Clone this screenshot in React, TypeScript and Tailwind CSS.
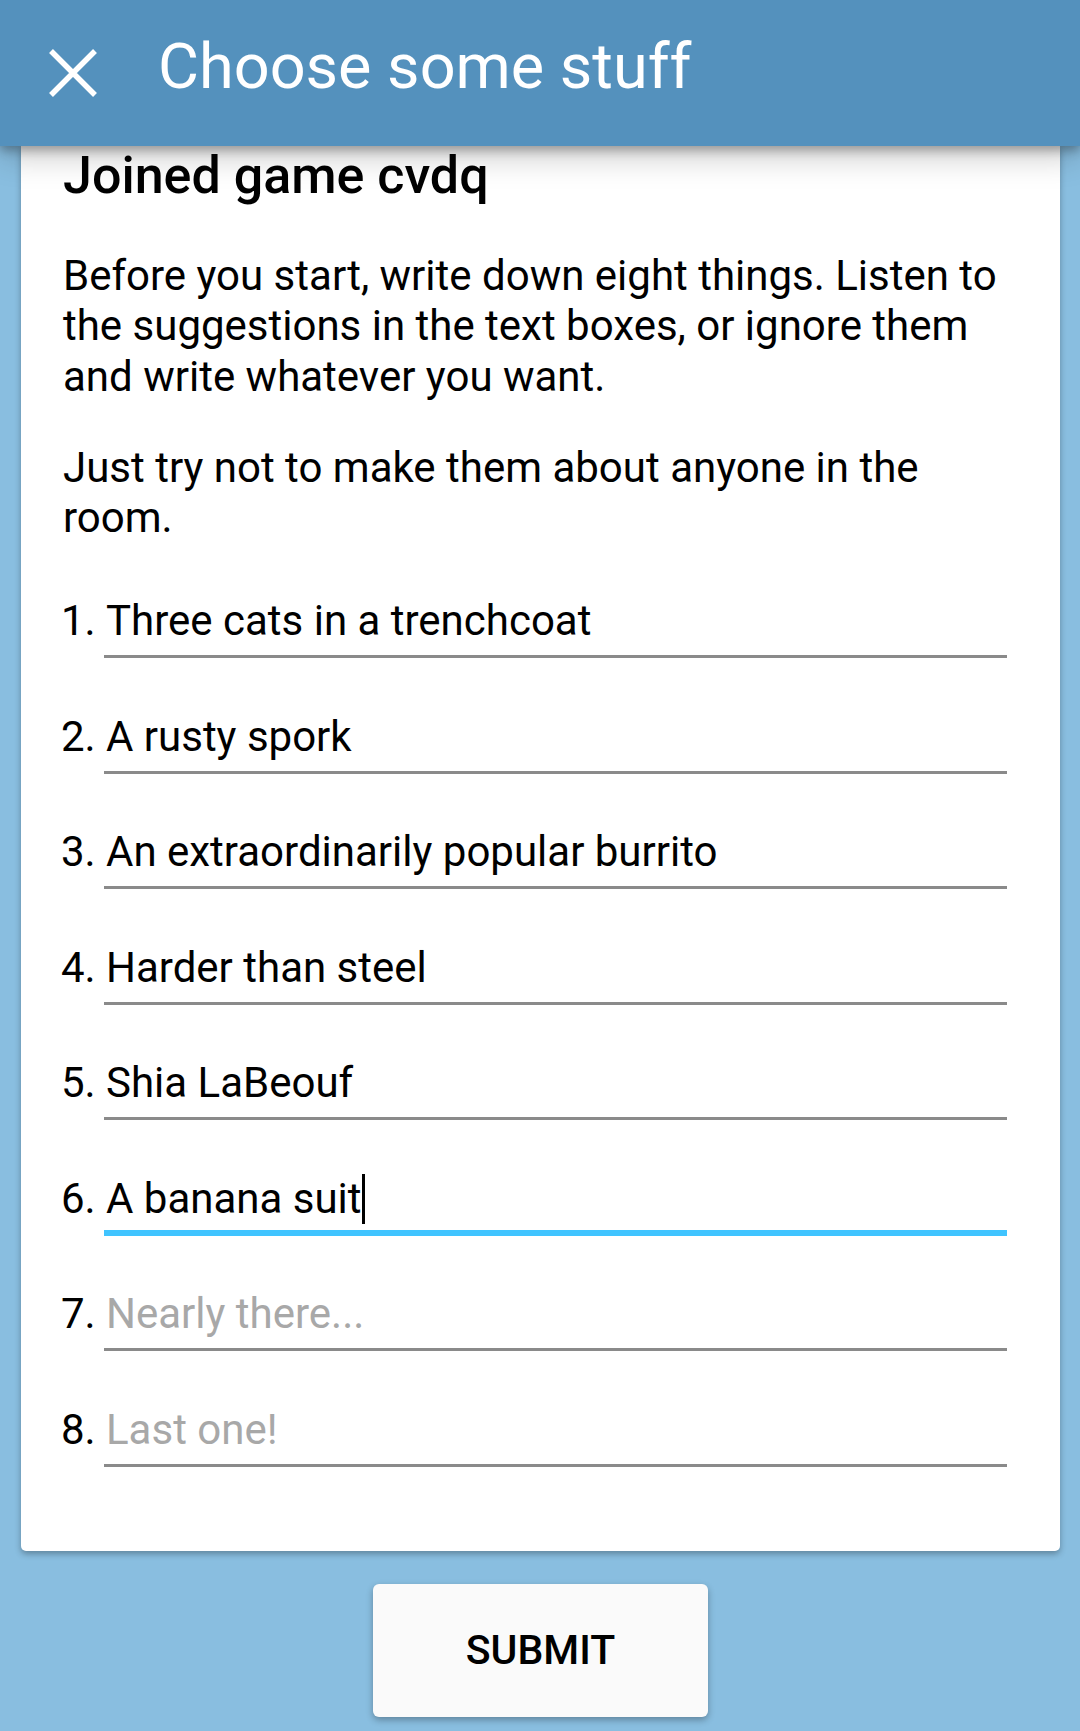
import React from 'react'

interface Item {
  value?: string
  placeholder?: string
  focused?: boolean
}

const items: Item[] = [
  { value: 'Three cats in a trenchcoat' },
  { value: 'A rusty spork' },
  { value: 'An extraordinarily popular burrito' },
  { value: 'Harder than steel' },
  { value: 'Shia LaBeouf' },
  { value: 'A banana suit', focused: true },
  { placeholder: 'Nearly there...' },
  { placeholder: 'Last one!' }
]

const CloseIcon = () => (
  <svg width="48" height="48" viewBox="0 0 48 48" className="mt-[49px] shrink-0">
    <path d="M2 2 L46 46 M46 2 L2 46" stroke="white" strokeWidth="5.5" strokeLinecap="butt" />
  </svg>
)

const ThingField: React.FC<{ index: number; item: Item }> = ({ index, item }) => {
  const line = item.focused
    ? 'border-b-[6px] border-[#40c4ff] pb-[6px]'
    : 'border-b-[3px] border-[#8a8a8a] pb-[9px]'

  return (
    <li className="-ml-[2px] flex text-[42px] leading-[50px]">
      <span className="w-[43px] shrink-0 text-black">{index}.</span>
      <div className={`flex-1 flex items-center pl-[2px] ${line}`}>
        {item.value ? (
          <span className="text-black">{item.value}</span>
        ) : (
          <span className="text-[#a8a8a8]">{item.placeholder}</span>
        )}
        {item.focused && <span className="inline-block w-[3px] h-[50px] bg-black" />}
      </div>
    </li>
  )
}

export default function App() {
  return (
    <div className="min-h-[1731px] bg-[#89bee0] font-['Roboto','Liberation_Sans',sans-serif] text-black">
      {/* Toolbar */}
      <header className="relative z-10 h-[146px] bg-[#5491bd] shadow-[0_4px_10px_rgba(0,0,0,0.3),0_10px_30px_rgba(0,0,0,0.22)] flex items-start pl-[49px]">
        <CloseIcon />
        <h1 className="ml-[61px] mt-[31px] text-[63px] leading-[72px] text-white">Choose some stuff</h1>
      </header>

      <main className="pl-[21px] pr-[20px]">
        <section className="bg-white rounded-b-[5px] shadow-[0_3px_6px_rgba(0,0,0,0.3)] pl-[42px] pr-[53px] pb-[84px]">
          <h2 className="text-[52px] leading-[60px] font-medium">Joined game cvdq</h2>
          <p className="mt-[45px] text-[42px] leading-[50.3px]">
            Before you start, write down eight things. Listen to the suggestions in the text boxes, or ignore them
            and write whatever you want.
          </p>
          <p className="mt-[41px] text-[42px] leading-[50.3px]">
            Just try not to make them about anyone in the room.
          </p>

          <ol className="mt-[53px] flex flex-col gap-[53.5px]">
            {items.map((item, i) => (
              <ThingField key={i} index={i + 1} item={item} />
            ))}
          </ol>
        </section>

        <div className="flex justify-center mt-[33px]">
          <button className="w-[335px] h-[133px] bg-[#fafafa] rounded-[6px] shadow-[0_3px_7px_rgba(0,0,0,0.3)] text-[41px] font-medium leading-none">
            SUBMIT
          </button>
        </div>
      </main>
    </div>
  )
}
